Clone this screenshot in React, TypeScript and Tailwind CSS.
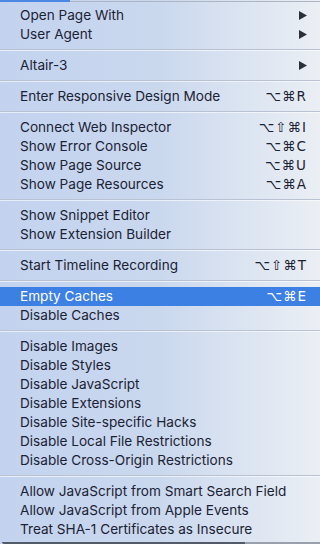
import React from "react";

type Item = { label: string; sc?: string; sub?: boolean; hl?: boolean };
type Group = Item[];

const groups: Group[] = [
  [
    { label: "Open Page With", sub: true },
    { label: "User Agent", sub: true },
  ],
  [{ label: "Altair-3", sub: true }],
  [{ label: "Enter Responsive Design Mode", sc: "⌥⌘R" }],
  [
    { label: "Connect Web Inspector", sc: "⌥⇧⌘I" },
    { label: "Show Error Console", sc: "⌥⌘C" },
    { label: "Show Page Source", sc: "⌥⌘U" },
    { label: "Show Page Resources", sc: "⌥⌘A" },
  ],
  [{ label: "Show Snippet Editor" }, { label: "Show Extension Builder" }],
  [{ label: "Start Timeline Recording", sc: "⌥⇧⌘T" }],
  [{ label: "Empty Caches", sc: "⌥⌘E", hl: true }, { label: "Disable Caches" }],
  [
    { label: "Disable Images" },
    { label: "Disable Styles" },
    { label: "Disable JavaScript" },
    { label: "Disable Extensions" },
    { label: "Disable Site-specific Hacks" },
    { label: "Disable Local File Restrictions" },
    { label: "Disable Cross-Origin Restrictions" },
  ],
  [
    { label: "Allow JavaScript from Smart Search Field" },
    { label: "Allow JavaScript from Apple Events" },
    { label: "Treat SHA-1 Certificates as Insecure" },
  ],
];

function Row({ it }: { it: Item }) {
  return (
    <div
      className={
        "flex h-[19px] items-center justify-between pl-[20px] pr-[13px] " +
        (it.hl ? "bg-[#3d80e4] text-white" : "text-[#1b2233]")
      }
    >
      <span className="text-[13.6px] leading-[19px]">{it.label}</span>
      {it.sub && (
        <svg width="8" height="9" viewBox="0 0 8 9" className={it.hl ? "fill-white" : "fill-[#2a2f3a]"}>
          <path d="M0 0 L8 4.5 L0 9 Z" />
        </svg>
      )}
      {it.sc && (
        <span
          className="text-[13.5px] leading-[19px] tracking-[1px]"
          style={{ fontFamily: "'DejaVu Sans', Inter, sans-serif" }}
        >
          {it.sc}
        </span>
      )}
    </div>
  );
}

export default function App() {
  return (
    <div
      className="relative h-[544px] w-[320px] overflow-hidden bg-gradient-to-r from-[#c3d3ef] via-[#cad8ee] to-[#ebeff4]"
      style={{ fontFamily: "Inter, 'Liberation Sans', sans-serif" }}
    >
      <div className="flex h-[3px]">
        <div className="h-[2px] w-[70px] bg-[#4a88e4]" />
        <div className="mt-[1px] h-[1px] flex-1 bg-[#aeb5c2]" />
      </div>
      <div className="pt-[3px]">
        {groups.map((g, gi) => (
          <div key={gi}>
            {gi > 0 && (
              <div className="flex h-[12px] items-center">
                <div className="h-[2px] w-full border-t border-[#b8c2d2] border-b-white/60 border-b" />
              </div>
            )}
            {g.map((it, i) => (
              <Row key={i} it={it} />
            ))}
          </div>
        ))}
      </div>
      <div className="absolute bottom-0 left-0 flex h-[3px] w-full">
        <div className="ml-[2px] h-[2px] w-[243px] self-end rounded-bl-[3px] bg-[#545b68]" />
        <div className="h-[2px] flex-1 self-end bg-[#9aa1ad]" />
      </div>
    </div>
  );
}
